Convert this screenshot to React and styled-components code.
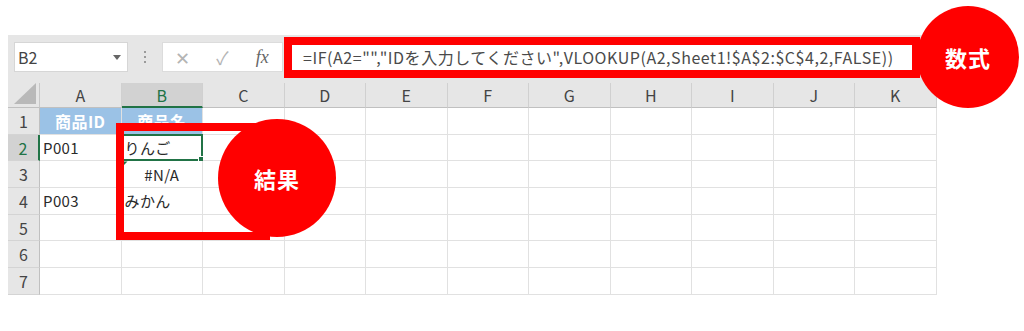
import styled, { createGlobalStyle } from "styled-components";

const GlobalStyle = createGlobalStyle`
  body {
    margin: 0;
    background: #fff;
    font-family: "Noto Sans CJK JP", "Noto Sans", sans-serif;
  }
`;

const Page = styled.div`
  position: relative;
  width: 1024px;
  height: 331px;
  padding: 35px 0 0 8px;
  box-sizing: border-box;
  overflow: hidden;
`;

const Sheet = styled.div`
  width: 929px;
  background: #e6e6e6;
`;

const Toolbar = styled.div`
  height: 48px;
  display: flex;
  align-items: flex-start;
  padding: 7px 6px 0 6px;
  box-sizing: border-box;
`;

const NameBox = styled.div`
  width: 114px;
  height: 30px;
  background: #fff;
  border: 1px solid #d6d6d6;
  box-sizing: border-box;
  display: flex;
  align-items: center;
  justify-content: space-between;
  padding: 0 6px 0 3px;
  font-size: 16px;
  color: #444;
`;

const Caret = styled.span`
  width: 0;
  height: 0;
  border-left: 4px solid transparent;
  border-right: 4px solid transparent;
  border-top: 5px solid #666;
`;

const Dots = styled.div`
  width: 34px;
  height: 30px;
  display: flex;
  flex-direction: column;
  align-items: center;
  justify-content: center;
  gap: 3px;
  span {
    width: 2px;
    height: 2px;
    background: #9a9a9a;
  }
`;

const FxBox = styled.div`
  width: 121px;
  height: 30px;
  background: #fff;
  border: 1px solid #dcdcdc;
  box-sizing: border-box;
  display: grid;
  grid-template-columns: repeat(3, 1fr);
  align-items: center;
  justify-items: center;
  color: #b4b4b4;
  font-size: 18px;
`;

const Fx = styled.span`
  font-family: "Liberation Serif", serif;
  font-style: italic;
  color: #666;
  font-size: 18px;
`;

const FormulaInput = styled.div`
  margin-left: 3px;
  flex: 1;
  height: 30px;
  background: #fff;
  border: 1px solid #dcdcdc;
  box-sizing: border-box;
  display: flex;
  align-items: center;
  padding-left: 16px;
  font-size: 16px;
  letter-spacing: 0.55px;
  color: #4a4a4a;
  white-space: nowrap;
`;

const Grid = styled.div`
  display: grid;
  grid-template-columns: 32px repeat(11, 81.5px);
  grid-template-rows: 25px repeat(7, 26.7px);
  background: #fff;
`;

const Corner = styled.div`
  background: #e6e6e6;
  border-right: 1px solid #c8c8c8;
  border-bottom: 1px solid #c0c0c0;
  position: relative;
  &::after {
    content: "";
    position: absolute;
    right: 3px;
    bottom: 3px;
    width: 22px;
    height: 21px;
    background: #b9b9b9;
    clip-path: polygon(100% 0, 100% 100%, 0 100%);
  }
`;

const ColHead = styled.div`
  background: ${(p) => (p.$active ? "#d2d2d2" : "#e6e6e6")};
  color: ${(p) => (p.$active ? "#217346" : "#444")};
  border-right: 1px solid #d0d0d0;
  border-bottom: ${(p) => (p.$active ? "2px solid #217346" : "1px solid #c0c0c0")};
  display: flex;
  align-items: center;
  justify-content: center;
  font-size: 16px;
`;

const RowHead = styled.div`
  background: ${(p) => (p.$active ? "#d2d2d2" : "#e6e6e6")};
  color: ${(p) => (p.$active ? "#217346" : "#444")};
  border-right: ${(p) => (p.$active ? "2px solid #217346" : "1px solid #c0c0c0")};
  border-bottom: 1px solid #d4d4d4;
  display: flex;
  align-items: center;
  justify-content: center;
  font-size: 16px;
`;

const Cell = styled.div`
  position: relative;
  background: ${(p) => (p.$fill ? "#9bc2e6" : "#fff")};
  color: ${(p) => (p.$fill ? "#fff" : "#2a2a2a")};
  font-weight: ${(p) => (p.$fill ? 700 : 400)};
  font-size: ${(p) => (p.$fill ? 16 : 15)}px;
  border-right: 1px solid #e1e1e1;
  border-bottom: 1px solid #e1e1e1;
  display: flex;
  align-items: center;
  justify-content: ${(p) => (p.$align === "center" ? "center" : "flex-start")};
  padding-left: ${(p) => (p.$align === "center" ? 0 : 3)}px;
  letter-spacing: 0.4px;
  white-space: nowrap;
  box-sizing: border-box;
`;

const Selection = styled.span`
  position: absolute;
  left: -1px;
  top: -1px;
  right: -1px;
  bottom: -1px;
  border: 2px solid #217346;
  &::after {
    content: "";
    position: absolute;
    right: -5px;
    bottom: -5px;
    width: 6px;
    height: 6px;
    background: #217346;
    border: 1px solid #fff;
  }
`;

const ErrorMark = styled.span`
  position: absolute;
  left: 0;
  top: 0;
  width: 6px;
  height: 6px;
  background: #217346;
  clip-path: polygon(0 0, 100% 0, 0 100%);
`;

const Frame = styled.div`
  position: absolute;
  left: ${(p) => p.$x}px;
  top: ${(p) => p.$y}px;
  width: ${(p) => p.$w}px;
  height: ${(p) => p.$h}px;
  border: 8px solid #ff0000;
  box-sizing: border-box;
`;

const Badge = styled.div`
  position: absolute;
  left: ${(p) => p.$x}px;
  top: ${(p) => p.$y}px;
  width: ${(p) => p.$size}px;
  height: ${(p) => p.$size}px;
  border-radius: 50%;
  background: #ff0000;
  color: #fff;
  font-weight: 700;
  font-size: 22px;
  display: flex;
  align-items: center;
  justify-content: center;
  letter-spacing: 1px;
`;

const columns = ["A", "B", "C", "D", "E", "F", "G", "H", "I", "J", "K"];

const data = {
  1: { A: { text: "商品ID", fill: true, align: "center" }, B: { text: "商品名", fill: true, align: "center" } },
  2: { A: { text: "P001" }, B: { text: "りんご", selected: true } },
  3: { B: { text: "#N/A", align: "center", error: true } },
  4: { A: { text: "P003" }, B: { text: "みかん" } },
};

export default function App() {
  return (
    <>
      <GlobalStyle />
      <Page>
        <Sheet>
          <Toolbar>
            <NameBox>
              B2
              <Caret />
            </NameBox>
            <Dots>
              <span />
              <span />
              <span />
            </Dots>
            <FxBox>
              <span>✕</span>
              <span>✓</span>
              <Fx>fx</Fx>
            </FxBox>
            <FormulaInput>
              =IF(A2="","IDを入力してください",VLOOKUP(A2,Sheet1!$A$2:$C$4,2,FALSE))
            </FormulaInput>
          </Toolbar>
          <Grid>
            <Corner />
            {columns.map((c) => (
              <ColHead key={c} $active={c === "B"}>
                {c}
              </ColHead>
            ))}
            {[1, 2, 3, 4, 5, 6, 7].map((r) => (
              <>
                <RowHead key={"h" + r} $active={r === 2}>
                  {r}
                </RowHead>
                {columns.map((c) => {
                  const v = (data[r] && data[r][c]) || {};
                  return (
                    <Cell key={c + r} $fill={v.fill} $align={v.align}>
                      {v.error && <ErrorMark />}
                      {v.text}
                      {v.selected && <Selection />}
                    </Cell>
                  );
                })}
              </>
            ))}
          </Grid>
        </Sheet>

        <Frame $x={284} $y={37} $w={636} $h={41} />
        <Badge $x={917} $y={6} $size={102}>
          数式
        </Badge>
        <Frame $x={116} $y={123} $w={154} $h={117} />
        <Badge $x={218} $y={119} $size={118}>
          結果
        </Badge>
      </Page>
    </>
  );
}
